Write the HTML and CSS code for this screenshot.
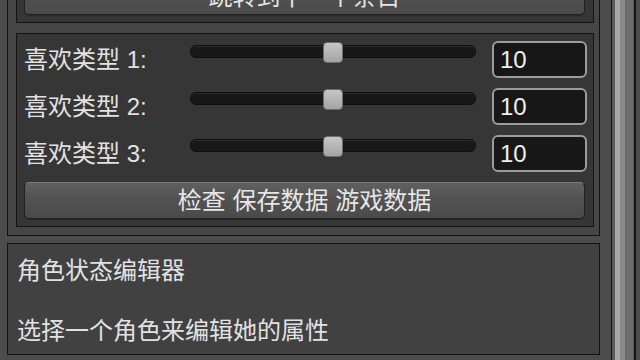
FILE: index.html
```html
<!DOCTYPE html>
<html lang="zh">
<head>
  <meta charset="UTF-8" />
  <meta name="viewport" content="width=device-width, initial-scale=1.0"/>
  <title>角色状态编辑器</title>
  <link rel="stylesheet" href="styles.css">
</head>
<body>

  <div class="window">
    <main class="content">

      <!-- Save data panel -->
      <div class="panel">
        <div class="section">
          <button class="btn">跳转到下一个条目</button>
        </div>

        <div class="section">
          <div class="row">
            <span class="label">喜欢类型 1:</span>
            <div class="slider"><div class="track"><div class="thumb" style="left: 50%"></div></div></div>
            <input class="field" type="text" value="10">
          </div>
          <div class="row">
            <span class="label">喜欢类型 2:</span>
            <div class="slider"><div class="track"><div class="thumb" style="left: 50%"></div></div></div>
            <input class="field" type="text" value="10">
          </div>
          <div class="row">
            <span class="label">喜欢类型 3:</span>
            <div class="slider"><div class="track"><div class="thumb" style="left: 50%"></div></div></div>
            <input class="field" type="text" value="10">
          </div>
          <button class="btn">检查 保存数据 游戏数据</button>
        </div>
      </div>

      <!-- Character editor -->
      <div class="info">
        <p>角色状态编辑器</p>
        <p>选择一个角色来编辑她的属性</p>
      </div>

    </main>

    <div class="scrollbar"></div>
  </div>

</body>
</html>
```

FILE: styles.css
```css
body {
  margin: 0;
  background-color: #4c4c4c;
  font-family: "Liberation Sans", "Noto Sans CJK SC", sans-serif;
  font-size: 24px;
  color: #e2e2e2;
  height: 360px;
  overflow: hidden;
}
.window {
  display: flex;
  padding-left: 7px;
  height: 360px;
}
.content {
  width: 593px;
  flex-shrink: 0;
  margin-top: -39px;
}

/* Panels */
.panel {
  border: 1px solid #121212;
  background-color: #464646;
  padding: 8px 5px 8px 8px;
}
.section {
  border: 1px solid #141414;
  background-color: #363636;
  padding: 7px 6px 7px 7px;
  display: flex;
  flex-direction: column;
  gap: 10px;
}
.section + .section {
  margin-top: 10px;
}

/* Buttons */
.btn {
  height: 37px;
  margin-right: 2px;
  border: 1px solid #222;
  border-top-color: #7a7a7a;
  border-radius: 5px;
  background: linear-gradient(#606060, #525252 45%, #4a4a4a);
  box-shadow: 0 1px 0 #2a2a2a;
  color: #e6e6e6;
  font-family: inherit;
  font-size: 24px;
  line-height: 30px;
  padding: 0;
}

/* Slider rows */
.row {
  display: flex;
  align-items: center;
  height: 37px;
}
.label {
  width: 166px;
  line-height: 30px;
  flex-shrink: 0;
}
.slider {
  width: 286px;
  flex-shrink: 0;
  align-self: flex-start;
  padding-top: 4px;
}
.track {
  position: relative;
  height: 11px;
  border-radius: 6px;
  background: #181818;
  border: 1px solid #0e0e0e;
  box-shadow: inset 0 1px 0 #2c2c2c;
  margin-right: 0;
}
.thumb {
  position: absolute;
  top: -4px;
  width: 20px;
  height: 21px;
  margin-left: -10px;
  border: 1px solid #6e6e6e;
  border-radius: 4px;
  background: linear-gradient(#c6c6c6, #a4a4a4);
  box-sizing: border-box;
}
.field {
  margin-left: 16px;
  width: 95px;
  height: 37px;
  box-sizing: border-box;
  border: 2px solid #9c9c9c;
  border-radius: 6px;
  background: #171717;
  color: #eeeeee;
  font-family: inherit;
  font-size: 24px;
  padding: 0 6px;
  outline: none;
}

/* Character editor */
.info {
  margin-top: 7px;
  border: 1px solid #121212;
  background-color: #414141;
  padding: 12px 8px 8px 9px;
}
.info p {
  margin: 0;
  line-height: 30px;
}
.info p + p {
  margin-top: 30px;
}

/* Scrollbar */
.scrollbar {
  margin-left: 11px;
  width: 25px;
  box-sizing: border-box;
  border-left: 1px solid #111;
  border-right: 2px solid #151515;
  background: linear-gradient(to right, #5c5c5c 0 3px, #a8a8a8 3px 8px, #8a8a8a 8px 13px, #6d6d6d 13px 21px, #595959 21px);
}
```
